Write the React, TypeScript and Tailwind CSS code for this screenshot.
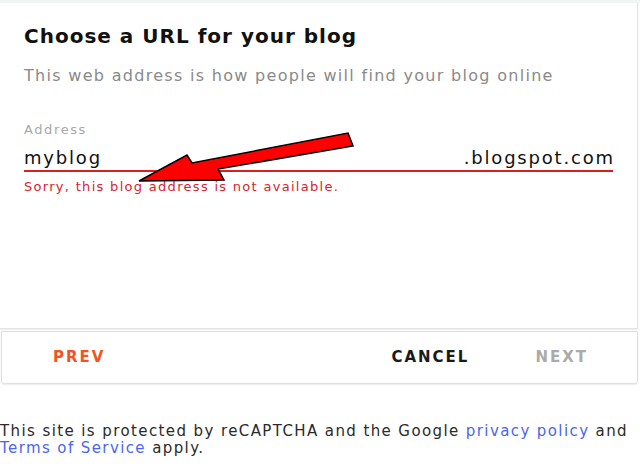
export default function App() {
  return (
    <div className="w-[640px] h-[464px] bg-white overflow-hidden font-['DejaVu_Sans',sans-serif] relative">
      <div className="h-[3px] bg-[#f3f4f4]" />
      <div className="w-[638px] h-[326px] border-r border-b border-[#e2e2e2] shadow-[0_1px_2px_rgba(0,0,0,0.08)] px-6 pt-[20px]">
        <h1 className="text-[20px] leading-[26px] font-bold tracking-[1px] text-[#111]">Choose a URL for your blog</h1>
        <p className="mt-[17px] text-[16px] leading-[20px] tracking-[1.3px] text-[#8a8a8a]">
          This web address is how people will find your blog online
        </p>
        <div className="mt-[36px] text-[13px] leading-[16px] tracking-[1.6px] text-[#a8a8a8]">Address</div>
        <div className="mt-[8px] flex items-end justify-between border-b-2 border-[#d82020] text-[18px] leading-[24px] tracking-[1.8px] text-[#111]">
          <span>myblog</span>
          <span className="-mr-[1.8px]">.blogspot.com</span>
        </div>
        <div className="mt-[7px] text-[13px] leading-[16px] tracking-[1.3px] text-[#d9232e]">
          Sorry, this blog address is not available.
        </div>
      </div>
      <div className="mt-[2px] ml-[1px] w-[637px] h-[53px] border border-[#e0e0e0] rounded-b-[3px] shadow-[0_1px_2px_rgba(0,0,0,0.08)] flex items-center text-[15px] font-bold tracking-[2px]">
        <span className="ml-[51px] text-[#f25322]">PREV</span>
        <span className="ml-auto text-[#1a1a1a]">CANCEL</span>
        <span className="ml-[66px] mr-[49px] text-[#aaaaaa]">NEXT</span>
      </div>
      <p className="mt-[39px] w-[640px] text-[15px] leading-[17px] tracking-[1.4px] text-[#2a2a2a]">
        This site is protected by reCAPTCHA and the Google <span className="text-[#4a66f0]">privacy policy</span> and{" "}
        <span className="text-[#4a66f0]">Terms of Service</span> apply.
      </p>
      <svg className="absolute left-0 top-0 pointer-events-none" width="640" height="464" viewBox="0 0 640 464">
        <polygon
          points="348,133 353,146 218,169 224,180 139,181 187,155 192,163"
          fill="#ff0000"
          stroke="#000"
          strokeWidth="1.5"
          strokeLinejoin="miter"
        />
      </svg>
    </div>
  );
}
